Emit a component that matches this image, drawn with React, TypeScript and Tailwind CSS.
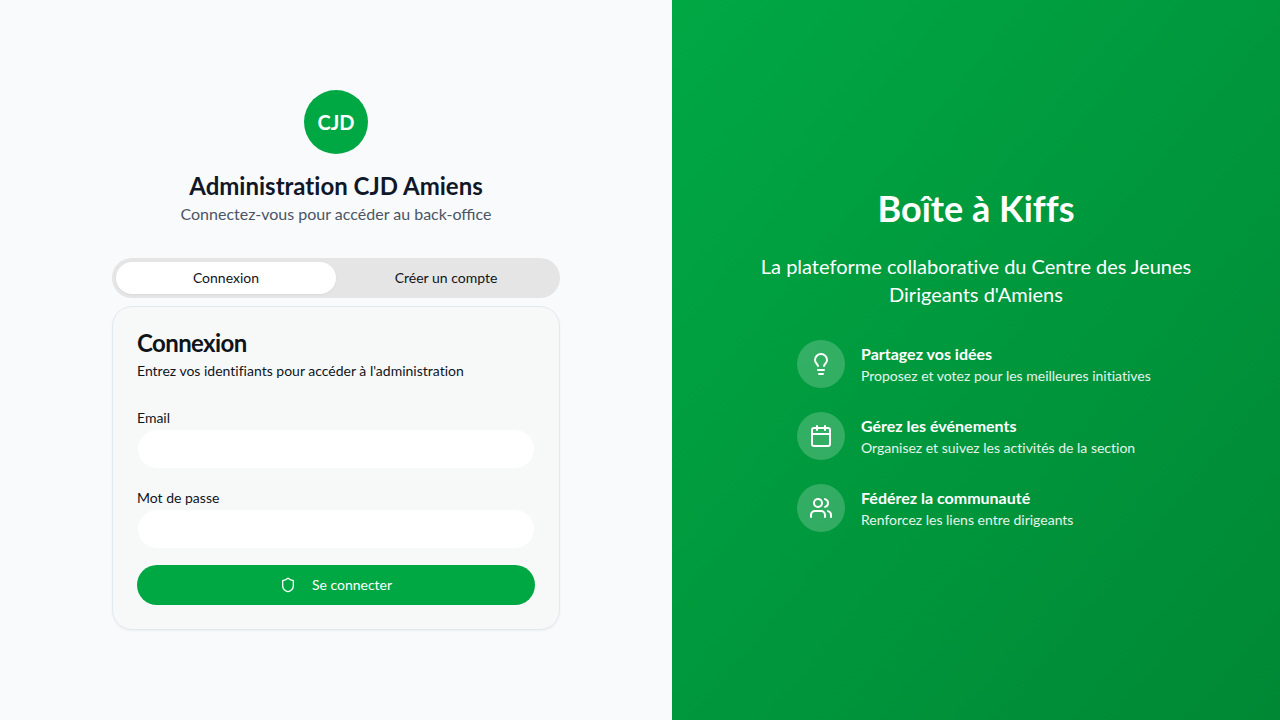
import { useState } from "react";
import { Calendar, Lightbulb, Shield, Users } from "lucide-react";

const features = [
  { icon: Lightbulb, title: "Partagez vos idées", text: "Proposez et votez pour les meilleures initiatives" },
  { icon: Calendar, title: "Gérez les événements", text: "Organisez et suivez les activités de la section" },
  { icon: Users, title: "Fédérez la communauté", text: "Renforcez les liens entre dirigeants" },
];

const inputClass =
  "block h-10 w-full rounded-[20px] border border-[#f7f9f9] bg-white px-3 text-sm outline-none focus:ring-2 focus:ring-[#00a844]";

export default function App() {
  const [tab, setTab] = useState("login");
  const tabClass = (name: string) =>
    tab === name ? "rounded-2xl bg-white text-sm shadow-xs" : "rounded-2xl text-sm";

  return (
    <main className="flex min-h-screen font-['Lato',sans-serif] text-[#0f1419] [font-variant-ligatures:no-common-ligatures]">
      <section className="flex flex-1 items-center justify-center bg-[#f9fafb] p-8">
        <div className="w-full max-w-md">
          <header className="mb-8 text-center">
            <div className="mx-auto mb-4 flex size-16 items-center justify-center rounded-full bg-[#00a844]">
              <span className="text-xl font-bold text-white">CJD</span>
            </div>
            <h1 className="text-2xl font-bold text-gray-900">Administration CJD Amiens</h1>
            <p className="text-gray-600 [font-variant-ligatures:normal]">Connectez-vous pour accéder au back-office</p>
          </header>
          <div role="tablist" className="grid h-10 grid-cols-2 rounded-[20px] bg-[#e5e5e5] p-1">
            <button type="button" role="tab" aria-selected={tab === "login"} onClick={() => setTab("login")} className={tabClass("login")}>
              Connexion
            </button>
            <button type="button" role="tab" aria-selected={tab === "register"} onClick={() => setTab("register")} className={tabClass("register")}>
              Créer un compte
            </button>
          </div>
          <div className="mt-2 rounded-[20px] border border-[#e1eaef] bg-[#f7f9f9] shadow-xs">
            <div className="flex flex-col gap-1.5 p-6">
              <h2 className="text-2xl leading-6 font-bold tracking-tight">Connexion</h2>
              <p className="text-sm leading-5">Entrez vos identifiants pour accéder à l'administration</p>
            </div>
            <form className="flex flex-col gap-4 px-6 pb-6" onSubmit={(e) => e.preventDefault()}>
              <div>
                <label htmlFor="email" className="text-sm">Email</label>
                <input id="email" type="email" className={inputClass} />
              </div>
              <div>
                <label htmlFor="password" className="text-sm">Mot de passe</label>
                <input id="password" type="password" className={inputClass} />
              </div>
              <button type="submit" className="flex h-10 w-full items-center justify-center gap-4 rounded-[20px] bg-[#00a844] text-sm text-white">
                <Shield className="size-4" />
                Se connecter
              </button>
            </form>
          </div>
        </div>
      </section>
      <aside className="flex w-[47.5%] items-center justify-center bg-linear-to-br from-[#00a844] to-[#008835] p-8 text-white">
        <div className="max-w-md text-center">
          <h2 className="mb-6 text-4xl font-bold">Boîte à Kiffs</h2>
          <p className="mb-8 text-xl leading-7">La plateforme collaborative du Centre des Jeunes Dirigeants d'Amiens</p>
          <ul className="mx-auto flex max-w-[358px] flex-col gap-6 text-left">
            {features.map(({ icon: Icon, title, text }) => (
              <li key={title} className="flex items-center gap-4">
                <div className="flex size-12 shrink-0 items-center justify-center rounded-full bg-white/20">
                  <Icon className="size-6" />
                </div>
                <div>
                  <h3 className="font-bold">{title}</h3>
                  <p className="text-sm text-white/90">{text}</p>
                </div>
              </li>
            ))}
          </ul>
        </div>
      </aside>
    </main>
  );
}
